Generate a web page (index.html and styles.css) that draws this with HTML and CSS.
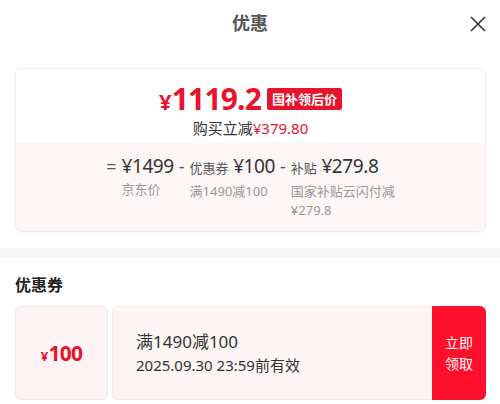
FILE: index.html
```html
<!DOCTYPE html>
<html>

<head>
    <meta charset="UTF-8">
    <meta name="viewport" content="width=device-width, initial-scale=1.0">
    <title>优惠</title>
    <link rel="stylesheet" href="styles.css">
</head>

<body>

    <div class="header">
        <h1 class="title">优惠</h1>
        <svg class="close" width="16" height="16" viewBox="0 0 16 16">
            <path d="M1 1L15 15M15 1L1 15" stroke="#333" stroke-width="1.6" fill="none" />
        </svg>
    </div>

    <div class="card">
        <div class="card-top">
            <div class="price-row">
                <span class="price"><i>¥</i>1119.2</span>
                <span class="badge">国补领后价</span>
            </div>
            <p class="reduce">购买立减<em>¥379.80</em></p>
        </div>

        <div class="card-bottom">
            <div class="calc">
                <span class="op">=</span>
                <div class="col">
                    <div class="amount">¥1499</div>
                    <div class="label">京东价</div>
                </div>
                <span class="op">-</span>
                <div class="col">
                    <div class="amount"><small>优惠券</small> ¥100</div>
                    <div class="label">满1490减100</div>
                </div>
                <span class="op">-</span>
                <div class="col col-wide">
                    <div class="amount"><small>补贴</small> ¥279.8</div>
                    <div class="label">国家补贴云闪付减¥279.8</div>
                </div>
            </div>
        </div>
    </div>

    <div class="divider"></div>

    <h2 class="sub-title">优惠券</h2>

    <div class="coupon">
        <div class="coupon-left">
            <span class="coupon-price"><i>¥</i>100</span>
        </div>
        <div class="coupon-main">
            <p class="coupon-name">满1490减100</p>
            <p class="coupon-time">2025.09.30 23:59前有效</p>
        </div>
        <div class="coupon-btn">立即<br>领取</div>
    </div>

</body>

</html>
```

FILE: styles.css
```css
* {
    margin: 0;
    padding: 0;
}

body {
    width: 500px;
    height: 404px;
    overflow: hidden;
    background: #fff;
    font-family: "Noto Sans", "Noto Sans CJK SC", sans-serif;
    color: #333;
}

i,
em {
    font-style: normal;
}

.header {
    position: relative;
    height: 48px;
    display: flex;
    align-items: center;
    justify-content: center;
}

.title {
    font-size: 18px;
    font-weight: bold;
    color: #555;
    margin-top: -4px;
}

.close {
    position: absolute;
    right: 14px;
    top: 16px;
}

.card {
    margin: 20px 14px 0 15px;
    border: 1px solid #f0eaea;
    border-radius: 7px;
    overflow: hidden;
    box-shadow: 0 1px 3px rgba(0, 0, 0, 0.04);
}

.card-top {
    padding: 9px 0 5px;
    text-align: center;
}

.price-row {
    display: flex;
    justify-content: center;
    align-items: center;
    gap: 6px;
    height: 40px;
}

.price {
    font-size: 30px;
    font-weight: bold;
    color: #e8132d;
    letter-spacing: -0.8px;
}

.price i {
    font-size: 22px;
    margin-right: 1px;
}

.badge {
    background: #e8132d;
    color: #fff;
    font-size: 13px;
    font-weight: bold;
    line-height: 22px;
    padding: 0 5px;
    border-radius: 2px;
    margin-top: 2px;
}

.reduce {
    font-size: 15px;
    line-height: 20px;
    color: #333;
}

.reduce em {
    color: #e8132d;
}

.card-bottom {
    background: #fdf6f6;
    padding: 11px 0 11px;
}

.calc {
    display: flex;
    justify-content: center;
    align-items: flex-start;
    gap: 5px;
}

.op {
    font-size: 18px;
    line-height: 24px;
    color: #555;
}

.col {
    display: flex;
    flex-direction: column;
}

.col-wide {
    width: 104px;
}

.amount {
    font-size: 19px;
    line-height: 24px;
    color: #333;
    letter-spacing: -0.4px;
    white-space: nowrap;
}

.amount small {
    font-size: 13px;
    color: #555;
    letter-spacing: 0;
}

.label {
    margin-top: 2px;
    font-size: 13px;
    line-height: 19px;
    color: #999;
}

.divider {
    margin-top: 16px;
    height: 10px;
    background: #f6f6f9;
}

.sub-title {
    margin: 16px 0 0 15px;
    font-size: 16px;
    font-weight: bold;
    color: #222;
    line-height: 22px;
}

.coupon {
    margin: 10px 14px 0 15px;
    height: 94px;
    display: flex;
    gap: 4px;
}

.coupon-left {
    width: 91px;
    background: #fdf3f4;
    border: 1px solid #f7e8ea;
    border-radius: 5px;
    display: flex;
    align-items: center;
    justify-content: center;
}

.coupon-price {
    font-size: 21px;
    font-weight: bold;
    color: #e8132d;
    letter-spacing: -0.8px;
}

.coupon-price i {
    font-size: 13px;
    margin-right: 1px;
}

.coupon-main {
    flex: 1;
    background: #fdf4f5;
    border: 1px solid #f7e8ea;
    border-right: none;
    border-radius: 5px 0 0 5px;
    display: flex;
    flex-direction: column;
    justify-content: center;
    padding-left: 23px;
}

.coupon-name {
    font-size: 17px;
    line-height: 24px;
    color: #333;
}

.coupon-time {
    font-size: 15px;
    line-height: 22px;
    color: #333;
}

.coupon-btn {
    width: 54px;
    margin-left: -4px;
    background: #fe0f2c;
    border-radius: 0 6px 6px 0;
    color: #fff;
    font-size: 14px;
    line-height: 21px;
    display: flex;
    align-items: center;
    justify-content: center;
    text-align: center;
}
```
